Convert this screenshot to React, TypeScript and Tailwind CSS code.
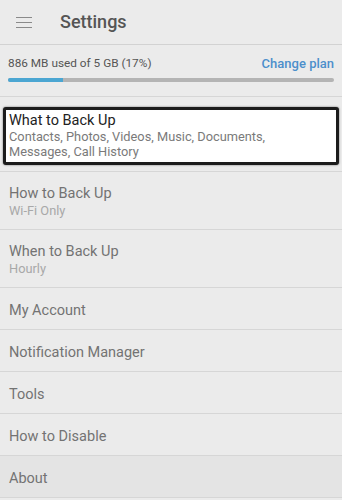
const rows = [
  { title: "How to Back Up", sub: "Wi-Fi Only" },
  { title: "When to Back Up", sub: "Hourly" },
  { title: "My Account" },
  { title: "Notification Manager" },
  { title: "Tools" },
  { title: "How to Disable" },
  { title: "About", dim: true },
];

export default function App() {
  return (
    <div className="w-[342px] h-[500px] overflow-hidden bg-[#ebebeb] font-['Roboto',sans-serif]">
      {/* Header */}
      <div className="h-[45px] flex items-center border-b border-[#d2d2d2]">
        <div className="w-[60px] flex items-center pl-[16px]">
          <svg width="16" height="13" viewBox="0 0 16 13" className="text-[#8a8a8a]">
            <path d="M0 1.5h16M0 6.5h16M0 11.5h16" stroke="currentColor" strokeWidth="1.2" />
          </svg>
        </div>
        <span className="text-[18px] font-medium text-[#555] leading-none">Settings</span>
      </div>

      {/* Storage */}
      <div className="h-[52px] px-[8px] pt-[9px] border-b border-[#d6d6d6]">
        <div className="flex items-center justify-between">
          <span className="text-[11.8px] text-[#555]">886 MB used of 5 GB (17%)</span>
          <span className="text-[13px] font-medium text-[#4c8fcb]">Change plan</span>
        </div>
        <div className="mt-[4px] h-[4px] rounded-full bg-[#b4b4b4] overflow-hidden">
          <div className="h-full bg-[#4ba6d2]" style={{ width: "17%" }} />
        </div>
      </div>

      {/* Focused item */}
      <div className="pt-[10px] pb-[6px] px-[3px] border-b border-[#d6d6d6]">
        <div className="h-[58px] bg-white border-[3px] border-[#1c1c1c] rounded-[3px] shadow-[0_0_2px_rgba(0,0,0,0.6)] px-[3px] pt-[2px]">
          <div className="text-[14.5px] text-[#222] leading-[17px]">What to Back Up</div>
          <div className="text-[12.8px] text-[#7a7a7a] leading-[15px]">
            Contacts, Photos, Videos, Music, Documents,
            <br />
            Messages, Call History
          </div>
        </div>
      </div>

      {rows.map((r) => (
        <div
          key={r.title}
          className={`${r.sub ? "h-[58px] pt-[13px]" : "h-[42px] pt-[14px]"} px-[9px] border-b border-[#d6d6d6] ${r.dim ? "bg-[#e4e4e4]" : ""}`}
        >
          <div className="text-[14.5px] text-[#737373] leading-[17px]">{r.title}</div>
          {r.sub && <div className="text-[12.8px] text-[#a8a8a8] leading-[17px]">{r.sub}</div>}
        </div>
      ))}
    </div>
  );
}
